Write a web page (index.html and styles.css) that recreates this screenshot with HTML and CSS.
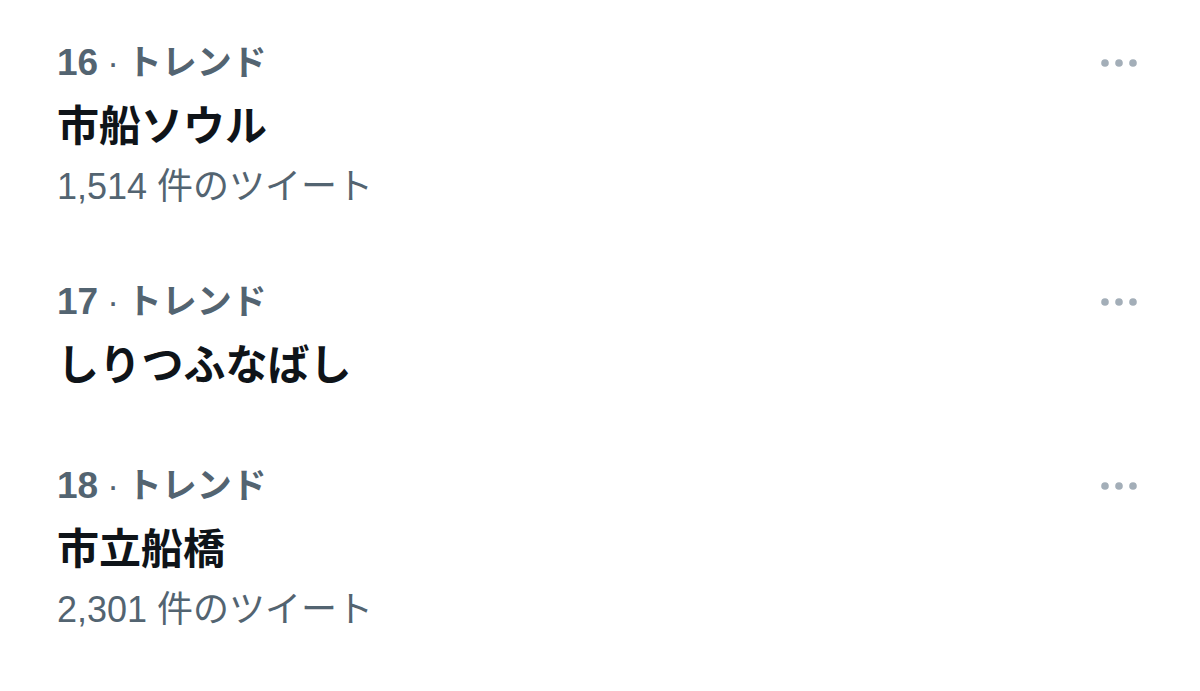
FILE: index.html
```html
<!DOCTYPE html>
<html lang="ja">
<head>
<meta charset="utf-8">
<title>トレンド</title>
<link rel="stylesheet" href="styles.css">
</head>
<body>
<div class="trends">
  <div class="trend">
    <div class="trend-body">
      <div class="trend-meta"><span class="rank">16</span><span class="sep">·</span>トレンド</div>
      <div class="trend-title">市船ソウル</div>
      <div class="trend-count">1,514 件のツイート</div>
    </div>
    <div class="more">
      <svg width="36" height="10" viewBox="0 0 36 10"><circle cx="4" cy="5" r="3.8"/><circle cx="18" cy="5" r="3.8"/><circle cx="32" cy="5" r="3.8"/></svg>
    </div>
  </div>
  <div class="trend">
    <div class="trend-body">
      <div class="trend-meta"><span class="rank">17</span><span class="sep">·</span>トレンド</div>
      <div class="trend-title">しりつふなばし</div>
    </div>
    <div class="more">
      <svg width="36" height="10" viewBox="0 0 36 10"><circle cx="4" cy="5" r="3.8"/><circle cx="18" cy="5" r="3.8"/><circle cx="32" cy="5" r="3.8"/></svg>
    </div>
  </div>
  <div class="trend">
    <div class="trend-body">
      <div class="trend-meta"><span class="rank">18</span><span class="sep">·</span>トレンド</div>
      <div class="trend-title">市立船橋</div>
      <div class="trend-count">2,301 件のツイート</div>
    </div>
    <div class="more">
      <svg width="36" height="10" viewBox="0 0 36 10"><circle cx="4" cy="5" r="3.8"/><circle cx="18" cy="5" r="3.8"/><circle cx="32" cy="5" r="3.8"/></svg>
    </div>
  </div>
</div>
</body>
</html>
```

FILE: styles.css
```css
html, body {
  margin: 0;
  padding: 0;
  background: #ffffff;
}

body {
  font-family: "Liberation Sans", "Noto Sans CJK JP", sans-serif;
  width: 1200px;
  height: 691px;
  overflow: hidden;
}

.trends {
  padding-top: 6px;
}

.trend {
  display: flex;
  justify-content: space-between;
  align-items: flex-start;
  padding: 32px 63px 33px 57px;
}

.trend-body {
  display: flex;
  flex-direction: column;
}

.trend-meta {
  font-size: 35px;
  line-height: 50px;
  height: 50px;
  font-weight: 700;
  color: #536471;
  white-space: nowrap;
}

.rank {
  font-size: 37px;
}

.sep {
  font-weight: 400;
  padding: 0 8px 0 9px;
}

.trend-title {
  margin-top: 9px;
  font-size: 42px;
  line-height: 60px;
  height: 60px;
  font-weight: 700;
  color: #0f1419;
}

.trend-count {
  margin-top: 5px;
  font-size: 36px;
  line-height: 50px;
  height: 50px;
  font-weight: 400;
  color: #536471;
}

.more {
  height: 50px;
  display: flex;
  align-items: center;
}

.more svg {
  display: block;
  fill: #a3aeb8;
}
```
